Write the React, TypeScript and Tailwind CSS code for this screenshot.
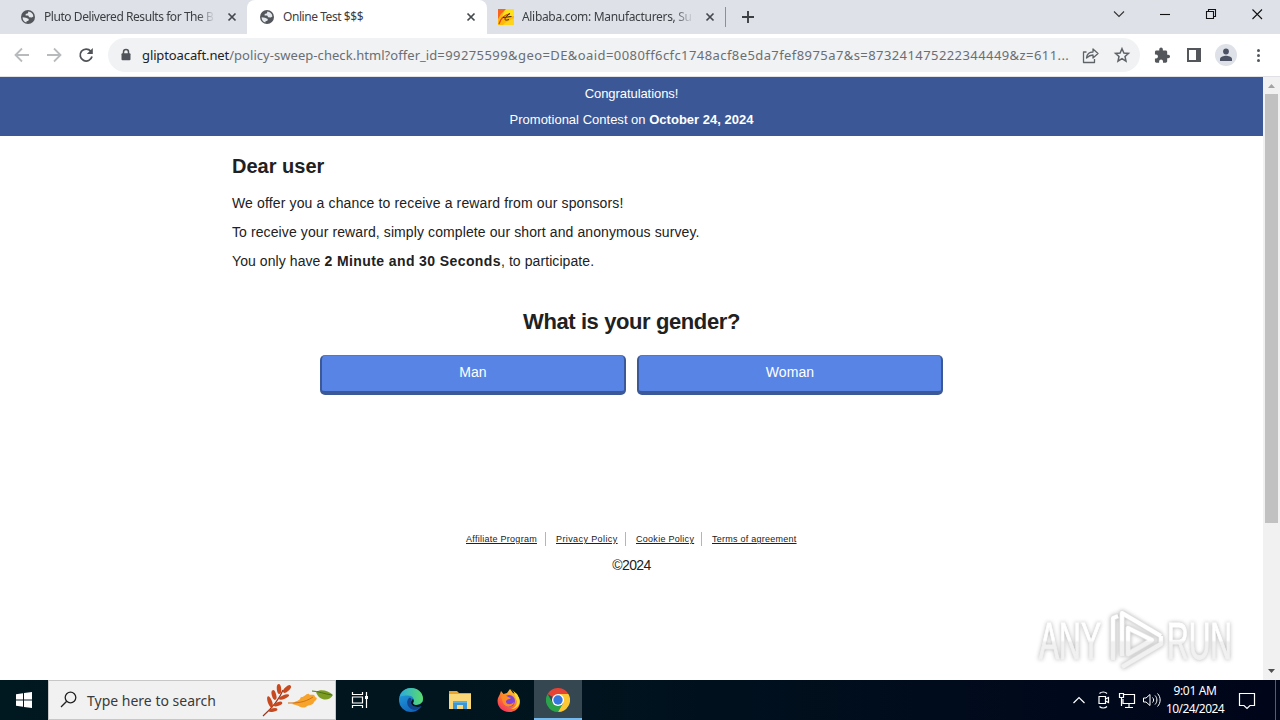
import React from "react";

const ui = "font-['Noto_Sans','Open_Sans',sans-serif]";

function Globe() {
  return (
    <svg width="16" height="16" viewBox="0 0 16 16" className="shrink-0">
      <circle cx="8" cy="8" r="7" fill="#53575c" />
      <path d="M2.6 8.2 6 8.8 8.8 9.9 8.4 11.8 6.6 12.3 6.3 13.5C3.8 12.7 2.6 10.6 2.6 8.2ZM8.3 2.5c2.7.2 4.9 2.2 5.1 5L11.8 8.6 9.2 8.2 8.2 6.6 5.6 6.4 5.7 5.1 8 4.3Z" fill="#e4e7ec" />
    </svg>
  );
}

function Alibaba() {
  return (
    <svg width="16" height="16" viewBox="0 0 16 16" className="shrink-0">
      <rect width="16" height="16" fill="#fdb80c" />
      <path d="M7 0H16V7L4 8Z" fill="#ffe11a" />
      <path d="M0 0H8L3 5 0 10Z" fill="#f8641c" />
      <path d="M7 14 16 9V16H5Z" fill="#ffd51a" />
      <path d="M1 15C2.500 10 5 6 12 4.500" fill="none" stroke="#e2410f" strokeWidth="1.200" />
      <path d="M5 8.500 13.500 7.500M7.500 8.500C6 11.500 8 11.500 11 10.500M8 7.500 12 4.500" fill="none" stroke="#40210b" strokeWidth="1" />
    </svg>
  );
}

function Cross() {
  return (
    <svg width="10" height="10" viewBox="0 0 10 10" className="shrink-0">
      <path d="M1.5 1.5 8.5 8.5M8.5 1.5 1.5 8.5" stroke="#45494e" strokeWidth="1.7" />
    </svg>
  );
}

function TabStrip() {
  return (
    <div className={`flex h-[34px] w-full bg-[#dee1e8] text-[12px] leading-[34px] text-[#3c4043] ${ui}`}>
      <div className="flex w-[247px] items-center pl-5">
        <Globe />
        <span className="ml-2 w-[171px] whitespace-nowrap tracking-[-0.44px] [mask-image:linear-gradient(to_right,black_90%,transparent_100%)]">
          Pluto Delivered Results for The B
        </span>
        <span className="ml-[12px] flex"><Cross /></span>
      </div>
      <div className="flex w-[240px] items-center rounded-t-lg bg-white pl-3">
        <Globe />
        <span className="ml-2 w-[171px] whitespace-nowrap tracking-[-0.44px]">Online Test $$$</span>
        <span className="ml-[12px] flex"><Cross /></span>
      </div>
      <div className="flex w-[238px] items-center pl-[11px]">
        <Alibaba />
        <span className="ml-2 w-[172px] whitespace-nowrap tracking-[-0.32px] [mask-image:linear-gradient(to_right,black_88%,transparent_100%)]">
          Alibaba.com: Manufacturers, Su
        </span>
        <span className="ml-[11px] flex"><Cross /></span>
      </div>
      <div className="mt-[7px] h-5 w-px bg-[#8b9097]" />
      <svg width="14" height="14" viewBox="0 0 14 14" className="ml-[15px] mt-[10px]">
        <path d="M7 1V13M1 7H13" stroke="#3c4043" strokeWidth="1.9" />
      </svg>
      <div className="ml-auto flex items-start">
        <svg width="168" height="30" viewBox="0 0 168 30" fill="none" stroke="#111" strokeWidth="1.1">
          <path d="M2 11.5 7 16.5 12 11.5" stroke="#333" />
          <path d="M48 14.5H58" />
          <path d="M94.5 11.5H101.5V18.5H94.5ZM96.500 11V9.500H103.500V16.500H102" />
          <path d="M140.500 9.500 150 19M150 9.500 140.500 19" />
        </svg>
      </div>
    </div>
  );
}

function Toolbar() {
  return (
    <div className="flex h-[43px] w-full items-start border-b border-[#dfe1e4] bg-white">
      <svg width="108" height="42" viewBox="0 0 108 42" fill="none" strokeWidth="1.8" className="shrink-0">
        <path d="M29 21H16M22 14.500 15.500 21 22 27.500" stroke="#b8bbbe" />
        <path d="M47 21H60M54 14.500 60.500 21 54 27.500" stroke="#b8bbbe" />
        <path d="M90.800 17.200A6 6 0 1 0 92 22.500" stroke="#4f5357" />
        <path d="M92.800 14V20H86.800Z" fill="#4f5357" />
      </svg>
      <div className="mt-1 flex h-[34px] w-[1032px] items-center rounded-full bg-[#f0f2f4] pl-[12px]">
        <svg width="12" height="14" viewBox="0 0 12 14" className="shrink-0">
          <path d="M3.500 6V4a2.500 2.500 0 0 1 5 0V6" fill="none" stroke="#50545a" strokeWidth="1.500" />
          <rect x="1.500" y="5.300" width="9" height="7" rx="1" fill="#50545a" />
        </svg>
        <span className={`ml-[10px] flex w-[940px] shrink-0 whitespace-nowrap text-[13px] leading-[34px] text-[#6a6e73] ${ui}`}>
          <span className="tracking-[-0.11px] text-[#202124]">gliptoacaft.net</span>
          <span className="tracking-[0.05px]">/policy-sweep-check.html?offer_id</span>
          <span className="tracking-[0.42px]">=99275599&amp;geo=DE&amp;oaid=0080ff6cfc1748acf8e5da7fef8975a7&amp;s=873241475222344449&amp;z=611...</span>
        </span>
        <svg width="56" height="20" viewBox="0 0 56 20" fill="none" stroke="#5f6368" strokeWidth="1.300" className="shrink-0">
          <path d="M4.500 7H1.500V17.500H12.500V14M4.500 13C5 9 7.500 7 11 7V4L16 8.500 11 13V10C8 10 6.500 11 4.500 13Z" strokeLinejoin="round" />
          <path d="M40 3.700 41.900 8 46.500 8.400 43 11.500 44 16.200 40 13.700 36 16.200 37 11.500 33.500 8.400 38.100 8Z" strokeWidth="1.500" />
        </svg>
      </div>
      <svg width="140" height="42" viewBox="0 0 140 42" className="shrink-0">
        <path transform="translate(13.5 12.8) scale(.72)" d="M20.500 11H19V7c0-1.100-.9-2-2-2h-4V3.500a2.500 2.500 0 0 0-5 0V5H4c-1.100 0-1.990.9-1.990 2v3.800H3.500a2.700 2.700 0 0 1 0 5.400H2V20c0 1.100.9 2 2 2h3.800v-1.500a2.700 2.700 0 0 1 5.400 0V22H17c1.100 0 2-.9 2-2v-4h1.500a2.500 2.500 0 0 0 0-5z" fill="#53575c" />
        <path d="M48 15H60V27H48Z" fill="none" stroke="#53575c" strokeWidth="2" />
        <path d="M56 14H61V28H56Z" fill="#53575c" />
        <circle cx="86" cy="21" r="11" fill="#dee1e8" />
        <circle cx="86" cy="17.500" r="2.900" fill="#4b5263" />
        <path d="M80 27V25C80 22.700 84 21.800 86 21.800S92 22.700 92 25V27Z" fill="#4b5263" />
        <circle cx="118.500" cy="16.500" r="1.500" fill="#53575c" />
        <circle cx="118.500" cy="21.500" r="1.500" fill="#53575c" />
        <circle cx="118.500" cy="26.500" r="1.500" fill="#53575c" />
      </svg>
    </div>
  );
}

function Scrollbar() {
  return (
    <div className="flex h-full w-[17px] flex-col items-center bg-[#f1f1f1]">
      <svg width="17" height="17" viewBox="0 0 17 17"><path d="M5 11 8.500 7 12 11Z" fill="#a3a3a3" /></svg>
      <div className="h-[429px] w-[13px] bg-[#c1c1c1]" />
      <svg width="17" height="17" viewBox="0 0 17 17" className="mt-auto"><path d="M5 6 8.500 10 12 6Z" fill="#505050" /></svg>
    </div>
  );
}

function Watermark() {
  return (
    <svg width="230" height="76" viewBox="0 0 230 76" className="absolute bottom-[2px] left-[1030px] [filter:drop-shadow(0_0_2px_#b4b4b4)]">
      <defs>
        <linearGradient id="wm" gradientUnits="userSpaceOnUse" x1="0" y1="0" x2="0" y2="76">
          <stop offset=".5" stopColor="#fff" />
          <stop offset=".53" stopColor="#f1f1f1" />
        </linearGradient>
      </defs>
      <g fill="url(#wm)" stroke="url(#wm)" strokeWidth="1" fontFamily="Liberation Sans Narrow, Liberation Sans, sans-serif" fontSize="52">
        <text x="9" y="57" textLength="62" lengthAdjust="spacingAndGlyphs">ANY</text>
        <text x="137" y="57" textLength="65" lengthAdjust="spacingAndGlyphs">RUN</text>
      </g>
      <g fill="none" strokeLinejoin="round">
        <path d="M83 58V16L88 14M92 54V11L131 34M98 26V52L122 38ZM92 65 131 42V34" stroke="#e4e4e4" strokeWidth="5.500" />
        <path d="M83 58V16L88 14M92 54V11L131 34M98 26V52L122 38ZM92 65 131 42V34" stroke="url(#wm)" strokeWidth="3.800" />
      </g>
    </svg>
  );
}

function Page() {
  const links = [
    ["Affiliate Program", "w-[71px] tracking-[0.27px]"],
    ["Privacy Policy", "w-[61px] tracking-[0.4px]"],
    ["Cookie Policy", "w-[57px] tracking-[0.28px]"],
    ["Terms of agreement", "w-[85px] tracking-[0.25px]"],
  ];
  return (
    <div className="relative flex h-[603px] w-full bg-white font-['Liberation_Sans',Arial,sans-serif] text-[#212121]">
      <main className="w-[1263px]">
        <header className="h-[59px] bg-[#3b5795] pt-[4px] text-center text-[13px] leading-[26px] text-white">
          <p className="tracking-[-0.07px]">Congratulations!</p>
          <p className="tracking-[0.01px]">Promotional Contest on <b className="tracking-[0.01px]">October 24, 2024</b></p>
        </header>
        <section className="ml-[232px] w-[799px] pt-[17px]">
          <h1 className="text-[20px] font-bold leading-[26px] tracking-[0.01px]">Dear user</h1>
          <div className="mt-[10px] text-[14px] leading-[29px]">
            <p className="tracking-[0.14px]">We offer you a chance to receive a reward from our sponsors!</p>
            <p className="tracking-[0.1px]">To receive your reward, simply complete our short and anonymous survey.</p>
            <p className="tracking-[0.08px]">You only have <b className="tracking-[0.4px]">2 Minute and 30 Seconds</b>, to participate.</p>
          </div>
          <h2 className="mt-[32px] text-center text-[22px] font-bold leading-[28px] tracking-[-0.4px]">What is your gender?</h2>
          <div className="mt-[19px] flex justify-center gap-[11px] text-[14px] tracking-[0.1px] text-white">
            <button className="h-[40px] w-[306px] rounded-[5px] border-x-2 border-b-4 border-t border-[#3b5998] border-t-[#4f78cc] bg-[#5885e5] pb-[3px]">Man</button>
            <button className="h-[40px] w-[306px] rounded-[5px] border-x-2 border-b-4 border-t border-[#3b5998] border-t-[#4f78cc] bg-[#5885e5] pb-[3px]">Woman</button>
          </div>
        </section>
        <footer className="mt-[137px] text-center">
          <div className="flex justify-center text-[9px] leading-[14px] underline">
            {links.map(([label, width], i) => (
              <div key={label} className="flex">
                {i > 0 && <span className="ml-[8px] mr-[10px] h-[14px] w-px bg-[#b5b5b5]" />}
                <a className={`${width} whitespace-nowrap text-left`}>{label}</a>
              </div>
            ))}
          </div>
          <p className="mt-[10px] text-[14px] leading-[18px] tracking-[-0.6px]">©2024</p>
        </footer>
      </main>
      <Scrollbar />
      <Watermark />
    </div>
  );
}

function Leaves() {
  return (
    <svg width="73" height="36" viewBox="0 0 73 36" className="ml-auto">
      <path d="M1 34C10 26 17 18 21 8" fill="none" stroke="#96351c" strokeWidth="1.200" />
      <g fill="#c9491f">
        <ellipse cx="17" cy="7" rx="2.200" ry="5" transform="rotate(-5 17 7)" />
        <ellipse cx="25" cy="7" rx="2.200" ry="5" transform="rotate(48 25 7)" />
        <ellipse cx="12" cy="13" rx="2.200" ry="5" transform="rotate(-15 12 13)" />
        <ellipse cx="22" cy="15" rx="2" ry="5.500" transform="rotate(68 22 15)" />
        <ellipse cx="8" cy="20" rx="2.200" ry="6" transform="rotate(-20 8 20)" />
        <ellipse cx="16" cy="22" rx="1.900" ry="4.500" transform="rotate(70 16 22)" />
        <ellipse cx="11" cy="28" rx="1.800" ry="4.500" transform="rotate(80 11 28)" />
      </g>
      <path d="M30 22C34 18 37 20 39 15 42 16 44 11 47 12 48 14 53 11 53 15 57 16 53 19 52 20 51 24 47 22 44 25 39 27 37 23 30 22Z" fill="#f7a42d" />
      <path d="M26 21C34 21 42 21 51 15" fill="none" stroke="#cf7119" strokeWidth="1" />
      <path d="M54 10C58 7 66 8 71 13 67 20 57 19 54 10Z" fill="#7c9c22" />
      <path d="M50 9C56 9 62 12 70 13" fill="none" stroke="#4d6f16" />
    </svg>
  );
}

function Edge() {
  return (
    <svg width="24" height="24" viewBox="0 0 24 24">
      <defs>
        <linearGradient id="eg" x1="0" x2="1"><stop stopColor="#2aa9e0" /><stop offset="1" stopColor="#5bdc6a" /></linearGradient>
        <linearGradient id="eb" x1="0" y1="0" x2=".5" y2="1"><stop stopColor="#25a5de" /><stop offset="1" stopColor="#1266bd" /></linearGradient>
      </defs>
      <circle cx="12" cy="12" r="12" fill="url(#eb)" />
      <path d="M.5 9C2 3 7 0 12 0 19 0 24 5 24 10.500 24 15 20.500 17 17 17 14 17 13.500 15.500 14.500 14 16 11 13.500 7.500 9 7.500 5 7.500 2 8 .5 9Z" fill="url(#eg)" />
      <path d="M10 10C6 14 9 21 15 22 18 22 21 20 22.500 18 18 20 13 19 12 15.500 11.500 13 13 12.500 12.500 11 12 10 11 9.500 10 10Z" fill="#12458d" />
      <path d="M14.300 14.500C13.500 16 15 17 17 17 20 17 22 16 24 13.500L24 18 22.500 18C18 20 12 18.500 12 14.500 12 13 13.500 12.500 13.500 11 15 11.500 15 13.500 14.300 14.500Z" fill="#00131d" />
    </svg>
  );
}

function Folder() {
  return (
    <svg width="22" height="20" viewBox="0 0 22 20">
      <path d="M0 1H8L10 3H22V19H0Z" fill="#e8a52d" />
      <path d="M0 4H22V19H0Z" fill="#fad877" />
      <path d="M4 11H18V19H14V15H8V19H4Z" fill="#3d96d4" />
      <path d="M4 11H18V13H4Z" fill="#5ab0e4" />
    </svg>
  );
}

function Firefox() {
  return (
    <svg width="24" height="24" viewBox="0 0 24 24">
      <defs><linearGradient id="ff" x1=".9" y1="0" x2=".2" y2="1"><stop stopColor="#ffe13d" /><stop offset=".5" stopColor="#ff812b" /><stop offset="1" stopColor="#f52d65" /></linearGradient></defs>
      <path d="M3 6 4 3 6.500 6 10 5 13 1 16 5 20 6.500 22 10C25 17 20 24 12 24S-1 17 1 10Z" fill="url(#ff)" />
      <circle cx="12" cy="13" r="6" fill="#8144d7" />
      <path d="M4 8C8 6 10 9 14 10 12 12 9 11 9 14 10 17 14 17 17 14 16 20 8 20 6 15Z" fill="#ff8b24" />
      <path d="M14 1C19 5 17 8 20 13 20 18 17 20 14 21 21 21 24 15 22 10L20 6Z" fill="#ffd838" />
    </svg>
  );
}

function Chrome() {
  return (
    <svg width="24" height="24" viewBox="0 0 24 24">
      <path d="M12 12 1.600 6A12 12 0 0 1 22.400 6Z" fill="#e64335" />
      <path d="M1.600 6A12 12 0 0 0 12 24L17.200 15 12 12 6.800 15Z" fill="#2ba34b" />
      <path d="M12 6H22.400A12 12 0 0 1 12 24L17.200 15Z" fill="#fcc934" />
      <circle cx="12" cy="12" r="6" fill="#fff" />
      <circle cx="12" cy="12" r="4.700" fill="#3478df" />
    </svg>
  );
}

function Taskbar() {
  return (
    <div className={`flex h-[40px] w-full bg-[linear-gradient(90deg,#001820_0%,#00141e_45%,#000b1c_75%,#00051a_100%)] ${ui}`}>
      <div className="flex w-12 items-center justify-center">
        <svg width="16" height="16" viewBox="0 0 16 16" fill="#fff"><path d="M0 2.300 7 1.300V7.500H0ZM8 1.100 16 0V7.500H8ZM0 8.500H7V14.700L0 13.700ZM8 8.500H16V16L8 14.900Z" /></svg>
      </div>
      <div className="flex w-[288px] items-center border border-[#c7c7c7] bg-[#f1f1f1] pl-[11px]">
        <svg width="18" height="18" viewBox="0 0 18 18" fill="none" stroke="#222" strokeWidth="1.300">
          <circle cx="10.500" cy="6.500" r="5.300" /><path d="M6.700 10.300 1 16" />
        </svg>
        <span className="ml-[9px] whitespace-nowrap text-[14px] text-[#3a3a3a]">Type here to search</span>
        <Leaves />
      </div>
      <div className="flex w-[50px] items-center justify-center pr-[2px]">
        <svg width="18" height="16" viewBox="0 0 18 16" fill="none" stroke="#fff" strokeWidth="1.200">
          <path d="M1.500 0V2.500H11.500V0M1.500 5H11.500V11H1.500ZM1.500 16V13.500H11.500V16M15.500 0V16" /><path d="M14 4H17V7H14Z" fill="#fff" stroke="none" />
        </svg>
      </div>
      <div className="flex w-[49px] items-center justify-center"><Edge /></div>
      <div className="flex w-[49px] items-center justify-center"><Folder /></div>
      <div className="flex w-[50px] items-center justify-center"><Firefox /></div>
      <div className="flex w-12 items-center justify-center border-b-2 border-[#76b9ed] bg-[#354750] pt-[2px]"><Chrome /></div>
      <svg width="92" height="40" viewBox="0 0 92 40" fill="none" stroke="#fff" strokeWidth="1.200" className="ml-auto">
        <path d="M1.500 23 7 17.500 12.500 23" />
        <path d="M27 16.500H33.500V23.500H27ZM33.500 19 36.500 17.500V22.500L33.500 21M27.500 13.500C29.500 11.500 33 11.500 35 13.500M27.500 26.500C29.500 28.500 33 28.500 35 26.500" />
        <path d="M52 14.500H62.500V23.500H51V19M57 23.500V27M53 27.500H61M47.500 13.500H51.500V17.500H47.500ZM49.500 18V26" />
        <path d="M71.500 18H74L78 14.500V25.500L74 22H71.500ZM80.500 17.500C82 19 82 21 80.500 22.500M83 15.500C85.500 18 85.500 22 83 24.500M85.500 13.500C89 17 89 23 85.500 26.500" strokeWidth="1" />
      </svg>
      <div className="w-[62px] whitespace-nowrap pt-[2px] text-center text-[12px] leading-[18px] tracking-[-0.6px] text-white">
        <p className="tracking-[-0.35px]">9:01 AM</p>
        <p>10/24/2024</p>
      </div>
      <svg width="50" height="40" viewBox="0 0 50 40" fill="none" stroke="#fff" strokeWidth="1.200" className="ml-[4px]">
        <path d="M9.500 13.500H24.500V25.500H20L17 28.500 14 25.500H9.500Z" />
        <path d="M45.500 0V40" stroke="#52606c" strokeWidth="1" />
      </svg>
    </div>
  );
}

export default function App() {
  return (
    <div className="flex h-[720px] w-[1280px] flex-col overflow-hidden">
      <TabStrip />
      <Toolbar />
      <Page />
      <Taskbar />
    </div>
  );
}
